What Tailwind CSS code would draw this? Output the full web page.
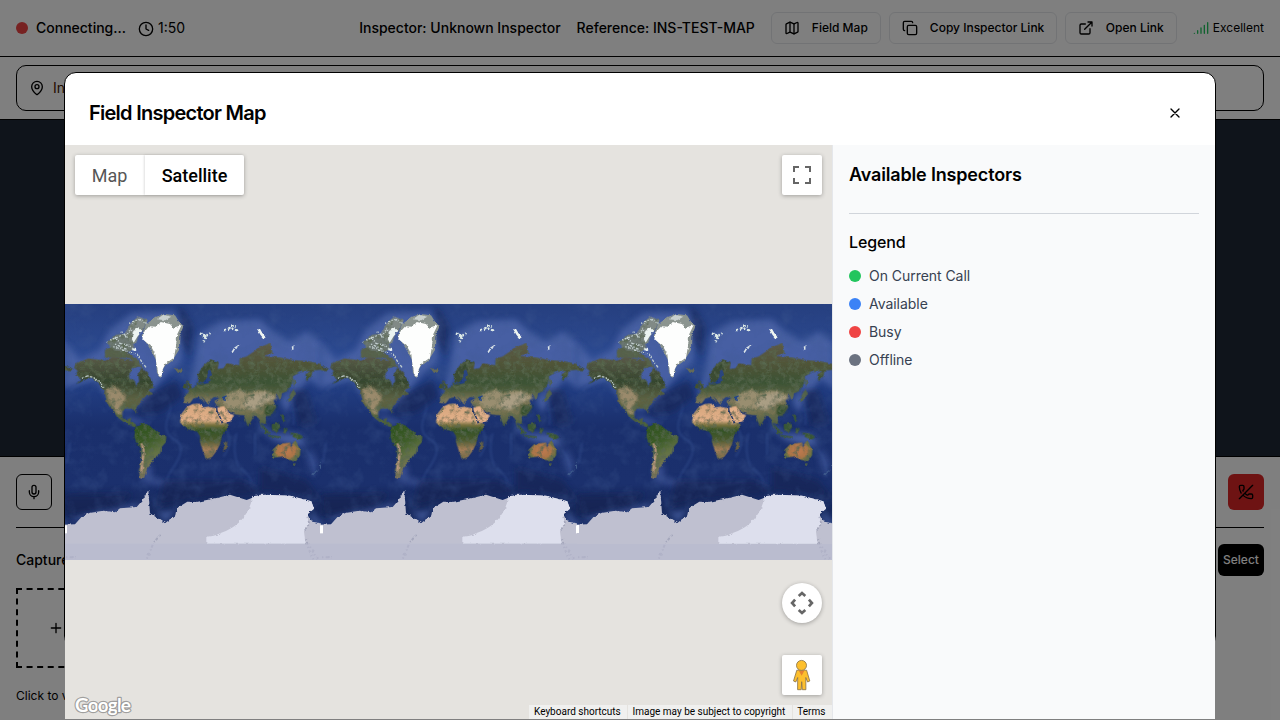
<!DOCTYPE html>
<html lang="en">
<head>
<meta charset="utf-8">
<title>Field Inspector Map</title>
<script src="https://cdn.jsdelivr.net/npm/@tailwindcss/browser@4"></script>
</head>
<body class="relative h-[720px] w-[1280px] overflow-hidden bg-white font-['Inter',sans-serif] text-black">

<!-- Call page -->
<div class="flex h-full flex-col">
  <header class="flex h-[57px] shrink-0 items-center justify-between border-b border-black px-4">
    <div class="flex items-center">
      <span class="size-3 rounded-full bg-[#ef4444]"></span>
      <span class="ml-2 w-[90px] text-sm font-medium">Connecting...</span>
      <svg class="mt-px ml-3 size-4" viewBox="0 0 24 24" fill="none" stroke="currentColor" stroke-width="2" stroke-linecap="round" stroke-linejoin="round"><circle cx="12" cy="12" r="10"/><path d="M12 6v6l4 2"/></svg>
      <span class="ml-1 text-sm">1:50</span>
    </div>
    <div class="flex items-center whitespace-nowrap">
      <span class="text-sm font-medium">Inspector: Unknown Inspector</span>
      <span class="ml-4 text-sm font-medium">Reference: INS-TEST-MAP</span>
      <div class="ml-4 flex gap-2 text-xs font-medium">
        <button class="flex h-8 w-[110px] items-center rounded-md border border-gray-200 pl-3"><svg class="mr-3 size-4" viewBox="0 0 24 24" fill="none" stroke="currentColor" stroke-width="2" stroke-linecap="round" stroke-linejoin="round"><path d="M14.106 5.553a2 2 0 0 0 1.788 0l3.659-1.83A1 1 0 0 1 21 4.619v12.764a1 1 0 0 1-.553.894l-4.553 2.277a2 2 0 0 1-1.788 0l-4.212-2.106a2 2 0 0 0-1.788 0l-3.659 1.83A1 1 0 0 1 3 19.381V6.618a1 1 0 0 1 .553-.894l4.553-2.277a2 2 0 0 1 1.788 0z"/><path d="M15 5.764v15M9 3.236v15"/></svg>Field Map</button>
        <button class="flex h-8 w-[168px] items-center rounded-md border border-gray-200 pl-3"><svg class="mr-3 size-4" viewBox="0 0 24 24" fill="none" stroke="currentColor" stroke-width="2" stroke-linecap="round" stroke-linejoin="round"><rect width="14" height="14" x="8" y="8" rx="2"/><path d="M4 16c-1.1 0-2-.9-2-2V4c0-1.1.9-2 2-2h10c1.1 0 2 .9 2 2"/></svg>Copy Inspector Link</button>
        <button class="flex h-8 w-[112px] items-center rounded-md border border-gray-200 pl-3"><svg class="mr-3 size-4" viewBox="0 0 24 24" fill="none" stroke="currentColor" stroke-width="2" stroke-linecap="round" stroke-linejoin="round"><path d="M15 3h6v6M10 14 21 3M18 13v6a2 2 0 0 1-2 2H5a2 2 0 0 1-2-2V8a2 2 0 0 1 2-2h6"/></svg>Open Link</button>
      </div>
      <svg class="ml-4 size-4" viewBox="0 0 24 24" fill="none" stroke="#22c55e" stroke-width="2" stroke-linecap="round"><path d="M2 20h.01M7 20v-4M12 20v-8M17 20V8M22 4v16"/></svg>
      <span class="ml-1 text-xs">Excellent</span>
    </div>
  </header>

  <div class="h-[63px] shrink-0 border-b border-black px-4 pt-2">
    <div class="flex h-[46px] items-center gap-2 rounded-[10px] border border-black pl-3 text-sm">
      <svg class="size-4" viewBox="0 0 24 24" fill="none" stroke="currentColor" stroke-width="2" stroke-linecap="round" stroke-linejoin="round"><path d="M20 10c0 4.993-5.539 10.193-7.399 11.799a1 1 0 0 1-1.202 0C9.539 20.193 4 14.993 4 10a8 8 0 0 1 16 0"/><circle cx="12" cy="10" r="3"/></svg>
      <span class="text-amber-950">Inspector location</span>
    </div>
  </div>

  <div class="h-[336px] shrink-0 bg-[#1f2937]"></div>

  <div class="grow border-t border-black px-4">
    <div class="flex items-center justify-between border-b border-black py-[17px]">
      <button class="flex size-9 items-center justify-center rounded-md border border-black"><svg class="size-4" viewBox="0 0 24 24" fill="none" stroke="currentColor" stroke-width="2" stroke-linecap="round" stroke-linejoin="round"><path d="M12 2a3 3 0 0 0-3 3v7a3 3 0 0 0 6 0V5a3 3 0 0 0-3-3ZM19 10v2a7 7 0 0 1-14 0v-2M12 19v3"/></svg></button>
      <button class="flex size-9 items-center justify-center rounded-md bg-[#dc2626]"><svg class="size-4" viewBox="0 0 24 24" fill="none" stroke="currentColor" stroke-width="2" stroke-linecap="round" stroke-linejoin="round"><path d="M10.1 13.9a14 14 0 0 0 3.732 2.668 1 1 0 0 0 1.213-.303l.355-.465A2 2 0 0 1 17 15h3a2 2 0 0 1 2 2v3a2 2 0 0 1-2 2 18 18 0 0 1-12.728-5.272M22 2 2 22M4.76 13.582A18 18 0 0 1 2 4a2 2 0 0 1 2-2h3a2 2 0 0 1 2 2v3a2 2 0 0 1-.8 1.6l-.468.351a1 1 0 0 0-.292 1.233 14 14 0 0 0 .244.473"/></svg></button>
    </div>
    <div class="mt-4 flex items-center justify-between">
      <span class="text-sm font-medium">Captured Photos</span>
      <button class="h-8 w-[46px] rounded-md bg-black text-xs font-medium text-white">Select</button>
    </div>
    <div class="mt-3 flex h-20 w-20 items-center justify-center border-2 border-dashed border-black">
      <svg class="size-4" viewBox="0 0 24 24" fill="none" stroke="currentColor" stroke-width="2" stroke-linecap="round"><path d="M5 12h14M12 5v14"/></svg>
    </div>
    <p class="mt-5 w-14 overflow-hidden text-xs whitespace-nowrap">Click to v</p>
  </div>
</div>

<!-- Backdrop -->
<div class="absolute inset-0 bg-black/50"></div>

<!-- Dialog -->
<div class="absolute top-[72px] left-16 h-[576px] w-[1152px] rounded-xl border border-black bg-white">
  <div class="flex h-[72px] items-start justify-between px-6 pt-6">
    <h2 class="text-xl leading-8 font-semibold tracking-[-0.037em]">Field Inspector Map</h2>
    <button class="flex size-8 items-center justify-center"><svg class="size-4" viewBox="0 0 24 24" fill="none" stroke="currentColor" stroke-width="2" stroke-linecap="round"><path d="M18 6 6 18M6 6l12 12"/></svg></button>
  </div>

  <div class="flex h-[574px]">
    <div class="relative h-full w-[767px] shrink-0 overflow-hidden bg-[#e5e3df] font-['Roboto',sans-serif]">
      <svg class="absolute top-[159px] left-0" width="767" height="256" viewBox="0 0 767 256">
        <defs>
          <linearGradient id="sea" x1="0" y1="0" x2="0" y2="1">
            <stop offset="0" stop-color="#263f7f"/><stop offset=".2" stop-color="#2c4a91"/><stop offset=".34" stop-color="#213c80"/><stop offset=".48" stop-color="#1a2f6c"/><stop offset=".7" stop-color="#1b306d"/><stop offset=".8" stop-color="#182a5d"/><stop offset="1" stop-color="#213a7c"/>
          </linearGradient>
          <linearGradient id="eurasia" x1="0" y1="0" x2="0" y2="1">
            <stop offset="0" stop-color="#5d5a48"/><stop offset=".25" stop-color="#505438"/><stop offset=".45" stop-color="#3c5234"/><stop offset=".55" stop-color="#4d5c3c"/><stop offset=".66" stop-color="#7d7659"/><stop offset=".8" stop-color="#777352"/><stop offset="1" stop-color="#3d5637"/>
          </linearGradient>
          <linearGradient id="namerica" x1="0" y1="0" x2="0" y2="1">
            <stop offset="0" stop-color="#5a5a48"/><stop offset=".35" stop-color="#36462f"/><stop offset=".6" stop-color="#5e6244"/><stop offset="1" stop-color="#49613a"/>
          </linearGradient>
          <linearGradient id="africa" x1="0" y1="0" x2="0" y2="1">
            <stop offset="0" stop-color="#d5a57c"/><stop offset=".3" stop-color="#e3b18a"/><stop offset=".38" stop-color="#7c7442"/><stop offset=".48" stop-color="#335226"/><stop offset=".65" stop-color="#4b5b30"/><stop offset=".83" stop-color="#a67f5b"/><stop offset="1" stop-color="#756c46"/>
          </linearGradient>
          <linearGradient id="samerica" x1="0" y1="0" x2=".3" y2="1">
            <stop offset="0" stop-color="#2d511f"/><stop offset=".4" stop-color="#3d5c29"/><stop offset=".65" stop-color="#627245"/><stop offset="1" stop-color="#857660"/>
          </linearGradient>
          <radialGradient id="aus"><stop offset="0" stop-color="#c07a50"/><stop offset=".65" stop-color="#ab7549"/><stop offset="1" stop-color="#68733d"/></radialGradient>
          <filter id="soft3" x="-20%" y="-20%" width="140%" height="140%"><feGaussianBlur stdDeviation="3"/></filter>
          <filter id="soft9" x="-30%" y="-30%" width="160%" height="160%"><feGaussianBlur stdDeviation="9"/></filter>
          <filter id="rough" x="-5%" y="-5%" width="110%" height="110%"><feTurbulence type="fractalNoise" baseFrequency=".09" numOctaves="3" seed="4" result="n"/><feDisplacementMap in="SourceGraphic" in2="n" scale="9" xChannelSelector="R" yChannelSelector="G"/></filter>
          <filter id="grain" filterUnits="userSpaceOnUse" x="15" y="12" width="768" height="768"><feTurbulence type="fractalNoise" baseFrequency=".0208333" numOctaves="4" seed="8" stitchTiles="stitch"/><feColorMatrix values="0 0 0 0 .05  0 0 0 0 .1  0 0 0 0 .28  2 0 0 0 -.9"/></filter>
          <filter id="landgrain" x="0" y="0" width="100%" height="100%"><feTurbulence type="fractalNoise" baseFrequency=".06" numOctaves="4" seed="21"/><feColorMatrix values="0 0 0 0 .1  0 0 0 0 .14  0 0 0 0 .08  2.4 0 0 0 -1.05" result="g"/><feComposite in="g" in2="SourceAlpha" operator="in" result="c"/><feMerge><feMergeNode in="SourceGraphic"/><feMergeNode in="c"/></feMerge></filter>
          <clipPath id="tileclip" clipPathUnits="userSpaceOnUse"><rect x="15" y="12" width="768" height="768"/></clipPath>
          <!-- Sea floor relief, repeated either side of the tile so that it joins up -->
          <g id="relief">
              <g fill="#4b63a6" filter="url(#soft9)" opacity=".9">
                <path d="M15 125 60 180 120 150 150 90 215 40 345 35 375 90 360 190 320 220 290 260 270 300 210 330 160 320 110 240 60 250 15 265Z"/>
                <path d="M420 100 480 65 600 58 640 95 690 125 740 95 783 125V265L750 235 690 260 620 200 420 230 395 290 375 290 400 210Z"/>
                <path d="M660 300 700 250 745 235 700 300 680 340Z"/>
                <path d="M600 365 640 400 720 400 740 440 690 435 640 420 600 385Z"/>
                <path d="M245 500 275 495 275 535 340 545 320 560 250 545Z" opacity=".7"/>
                <path d="M275 600 315 665 350 625 310 640Z"/>
                <path d="M15 665 70 640 160 620 240 610 240 630 60 660Z" opacity=".7"/>
                <path d="M755 640 783 665V690L750 650Z"/>
                <path d="M180 345 240 355 270 375 210 375Z" opacity=".7"/>
                <path d="M750 440 775 490 760 530 740 480Z" opacity=".6"/>
              </g>
              <g fill="none" stroke="#3e5b9d" stroke-width="6" filter="url(#soft3)" opacity=".38">
                <path d="M300 270Q345 300 325 350T345 420 335 510 430 560 490 545M540 505Q580 530 570 555"/>
                <path d="M530 400Q515 450 535 500M585 400V465M695 300Q705 340 700 375M740 450Q770 490 760 530M30 270Q60 250 100 240M20 490 30 430"/>
                <path d="M490 470Q520 430 500 390M690 330Q720 320 760 360"/>
              </g>
              <g fill="#13234f" filter="url(#soft9)" opacity=".6">
                <path d="M250 290 350 240 370 290 300 340 230 345Z"/><path d="M15 585 220 580 180 620 20 650Z"/><path d="M310 540 550 540 620 580 390 600 290 620Z"/><path d="M360 12 400 80 390 180 360 110Z"/><path d="M690 270 740 270 770 370 720 380Z"/><path d="M600 500 740 540 783 600 740 590 600 570Z"/>
              </g>
          </g>
          <g id="world" transform="scale(.333333333) translate(-15 -12)">
            <g clip-path="url(#tileclip)">
              <rect x="0" y="12" width="800" height="768" fill="url(#sea)"/>
              <use href="#relief" x="-768"/><use href="#relief"/><use href="#relief" x="768"/>
              <rect x="15" y="12" width="768" height="768" filter="url(#grain)" opacity=".4"/>
              <g filter="url(#rough)"><g filter="url(#landgrain)">
                <!-- North America -->
                <path fill="url(#namerica)" d="M48 190 85 175 135 182 160 170 215 182 238 188 244 198 220 203 206 224 208 237 223 241 229 258 238 243 233 220 246 203 263 220 277 245 282 262 264 270 279 282 259 288 248 296 239 307 229 322 228 342 219 325 195 325 185 340 189 357 202 359 213 353 211 365 224 370 231 384 218 379 190 365 171 350 157 329 141 310 137 290 132 273 115 249 95 232 75 240 49 252 65 236 46 225 53 213 43 203Z"/>
                <path fill="#57604b" d="M135 150 155 140 190 148 230 175 250 205 235 198 210 175 170 172 135 174Z"/>
                <path fill="#818a86" d="M190 112 212 70 235 50 263 60 255 79 236 105 228 130 205 135Z"/>
                <path fill="#6d7873" d="M140 127 165 105 195 100 225 141 208 155 163 151Z"/>
                <path fill="#9a8a6c" filter="url(#soft3)" d="M137 270 160 255 190 278 198 300 182 318 186 345 170 340 147 305Z"/>
                <!-- South America -->
                <path fill="url(#samerica)" d="M226 383 243 371 267 376 283 389 292 397 319 410 317 427 304 442 300 461 283 473 274 492 262 504 257 519 250 538 240 535 237 512 243 482 244 445 229 428 223 409Z"/>
                <path fill="none" stroke="#bb9981" stroke-width="7" d="M244 430 251 452 247 492 243 520"/>
                <!-- Eurasia -->
                <path fill="url(#eurasia)" d="M372 289 383 280 391 268 410 258 411 246 425 254 446 249 445 230 435 238 427 252 416 240 413 222 429 199 451 179 476 187 473 207 490 205 500 190 538 196 539 176 560 170 578 157 600 141 631 130 637 158 615 168 659 173 699 180 746 184 800 196 800 208 760 211 753 230 740 243 736 224 753 212 720 216 698 229 696 249 684 272 667 280 660 300 651 282 640 301 648 321 632 345 616 348 619 375 604 368 605 388 596 355 583 346 564 380 551 346 528 344 515 338 490 328 470 316 463 303 480 294 463 290 450 300 445 315 435 300 421 287 437 309 415 292 401 294 389 310 373 309Z"/>
                <path fill="#3b4b31" d="M413 225 430 200 451 178 476 188 460 203 444 225 435 240 424 249Z"/>
                <path fill="#998e70" filter="url(#soft3)" d="M495 284 540 268 565 280 590 270 632 277 654 294 625 305 590 328 545 325 510 332 490 310Z"/>
                <path fill="#aa9e84" filter="url(#soft3)" d="M550 305 580 286 610 277 642 293 616 308 580 332 553 320Z"/>
                <path fill="#405030" d="M384 257 380 240 389 247 396 266 384 273ZM371 253 382 251 379 266 370 265Z"/>
                <path fill="#35502f" filter="url(#soft3)" d="M617 314 650 318 632 347 612 345Z"/>
                <path fill="#474f37" d="M5 196 28 201 40 208 31 214 5 209Z"/>
                <!-- Africa, Arabia, Madagascar -->
                <path fill="url(#africa)" d="M360 368 364 342 382 320 398 312 419 311 426 323 445 320 469 326 487 361 501 373 504 383 486 405 481 430 471 450 456 471 438 478 430 457 421 430 420 408 411 394 379 386Z"/>
                <path fill="#e3b08a" d="M472 323 492 318 506 340 522 345 511 365 487 372 473 342Z"/>
                <path fill="#665d43" d="M494 431 502 424 500 448 489 456Z"/>
                <!-- Southeast Asia and Oceania -->
                <path fill="#395636" d="M604 369 620 388 632 402 617 399ZM635 375 657 367 661 381 649 397 636 388ZM670 385 683 389 674 402ZM690 398 710 400 730 411 720 418 700 411ZM663 345 670 343 676 365 668 362ZM624 405 659 409 658 414 625 409Z"/>
                <path fill="#52624a" d="M699 267 708 280 691 304 681 304ZM697 230 706 245 702 262Z"/>
                <path fill="url(#aus)" d="M637 451 654 433 674 429 690 428 692 440 705 421 721 450 720 466 707 484 684 479 669 469 640 473Z"/>
                <path fill="#53643e" d="M697 491 708 491 701 498Z"/>
              </g>
                <path fill="#3f5b8c" d="M780 485 792 500 780 507ZM777 506 760 526 753 523Z"/>
                <!-- Inland water -->
                <path fill="#2a447f" d="M442 219 450 208 455 220 446 236 458 240 442 246Z"/>
                <path fill="#24458a" d="M488 290 500 286 497 304 489 300Z"/>
                <path fill="none" stroke="#223764" stroke-width="4" d="M469 328 488 369"/>
                <!-- Snow -->
                <path fill="none" stroke="#b9c6c4" stroke-width="4" stroke-dasharray="7 4 12 3" d="M66 235 82 228 100 232 117 245 132 263"/>
                <path fill="none" stroke="#c3d0d0" stroke-width="4" stroke-dasharray="4 5 8 4" d="M140 128 167 112 180 130 208 137 225 151M160 140 190 150 232 164 245 185 258 202M207 70 236 58 260 70M196 112 213 86 220 117M150 120 190 105M165 132 200 148M185 95 205 115"/>
                <path fill="#ecf4f2" d="M220 93 235 82 247 92 232 110 221 128 216 118ZM222 145 230 148 228 153 216 151Z"/>
                <!-- Greenland and Iceland -->
                <path fill="#8b948f" d="M258 73 289 50 313 42 345 46 360 70 371 77 358 110 357 150 336 183 311 202 303 235 291 219 287 178 267 142 245 107Z"/>
                <path fill="#fdfefd" d="M250 98 268 79 290 80 302 66 330 72 340 83 365 75 352 102 348 139 342 173 316 191 306 213 304 232 295 222 289 190 286 163 273 139 247 117Z"/>
                <path fill="#c9d0cf" d="M290 58 310 44 334 50 316 61Z"/>
                <path fill="#646a58" d="M345 207 365 205 368 214 354 219Z"/>
                <path fill="none" stroke="#dce9e6" stroke-width="7" stroke-dasharray="6 5 9 3" d="M420 100 435 110 450 100M431 127 438 103M493 91 510 84 535 92M515 76 527 82"/>
                <path fill="none" stroke="#eff5f1" stroke-width="8" d="M595 86 605 103 614 114"/><path fill="none" stroke="#dce5e9" stroke-width="5" d="M516 158 524 145 540 134M698 139V149"/>
                <!-- Antarctica -->
                <path fill="#bfc0d0" d="M-15 675 45 673 65 650 90 638 130 632 165 637 180 625 230 621 248 600 265 570 270 640 293 655 315 670 346 646 350 625 382 605 410 606 470 594 510 584 560 600 600 584 690 587 754 604 762 626 744 641 757 665 815 675V810H-15Z"/>
                <path fill="#dddfed" d="M576 589 616 584 690 587 754 604 762 626 744 641 744 670 732 695 737 731H439V709Q455 712 480 700 552 676 573 609Z"/>
                <path fill="none" stroke="#8689a3" stroke-width="6" stroke-dasharray="4 7 9 6" opacity=".45" d="M742 650 748 670 734 692M738 715 745 745 760 778M750 740 772 778M300 705 280 730 260 778M18 772H50"/>
              </g>
              <rect x="0" y="731" width="800" height="60" fill="#b7b9ce" opacity=".6"/>
              <path fill="#fff" d="M15 676h6v24h-6zM780 676h10v24h-10z"/>
            </g>
          </g>
        </defs>
        <use href="#world"/><use href="#world" x="256"/><use href="#world" x="512"/>
      </svg>

      <div class="absolute top-[10px] left-[10px] flex h-10 rounded-xs bg-white text-lg shadow-[0_1px_4px_rgba(0,0,0,0.3)]">
        <button class="w-[70px] pt-0.5 pr-px text-[#565656]">Map</button>
        <button class="w-[99px] pt-0.5 font-medium shadow-[-1px_0_2px_rgba(0,0,0,0.12)]">Satellite</button>
      </div>
      <button class="absolute top-[10px] right-[10px] flex size-10 items-center justify-center rounded-xs bg-white shadow-[0_1px_4px_rgba(0,0,0,0.3)]"><svg class="size-[18px]" viewBox="0 0 18 18" fill="#666"><path d="M0 0v6h2V2h4V0H0zm16 0h-4v2h4v4h2V0h-2zm0 16h-4v2h6v-6h-2v4zM2 12H0v6h6v-2H2v-4z"/></svg></button>
      <button class="absolute top-[438px] right-[10px] flex size-10 items-center justify-center rounded-full bg-white shadow-[0_1px_4px_rgba(0,0,0,0.3)]"><svg class="size-6" viewBox="0 0 24 24" fill="none" stroke="#666" stroke-width="2.7"><path d="m8.7 5.1 3.3-3 3.3 3M8.7 18.9l3.3 3 3.3-3M5.1 8.7l-3 3.3 3 3.3M18.9 8.7l3 3.3-3 3.3"/></svg></button>
      <button class="absolute top-[510px] right-[10px] size-10 rounded-xs bg-white shadow-[0_1px_4px_rgba(0,0,0,0.3)]"><svg class="size-10" viewBox="0 0 40 40"><g fill="#fdbf2d" stroke="#857047" stroke-width=".8"><path d="M14.8 15.2h9.8l3.2 10.8-2.2 1-1.8-4.5.1 12.2h-3.6l-.6-8-.5 8h-3.6l.1-12.2-1.9 4.5-2.3-1z"/><circle cx="19.5" cy="10.4" r="5"/></g><path fill="#e58031" d="M16.6 15.2q3 1.5 6 0l-3 5.6z"/></svg></button>
      <svg class="absolute bottom-0 left-[8px]" width="64" height="28" viewBox="0 0 64 28"><text x="2" y="20.5" font-family="Lato, sans-serif" font-size="19" font-weight="700" textLength="56" fill="#fff" stroke="#8d8d8d" stroke-width="2.4" stroke-opacity=".8" paint-order="stroke" stroke-linejoin="round">Google</text></svg>
      <div class="absolute right-0 bottom-0 flex h-[14px] gap-px text-[10px] leading-[14px] text-black">
        <span class="w-[98px] bg-[#f5f5f5]/70 pl-[5px]">Keyboard shortcuts</span>
        <span class="w-[164px] bg-[#f5f5f5]/70 pl-[4.5px]">Image may be subject to copyright</span>
        <span class="w-[39px] bg-[#f5f5f5]/70 pl-[4.3px]">Terms</span>
      </div>
    </div>

    <aside class="h-full grow border-l border-[#e5e7eb] bg-[#f9fafb] p-4">
      <h3 class="text-lg leading-7 font-semibold tracking-[-0.009em]">Available Inspectors</h3>
      <div class="mt-6 border-t border-[#d1d5db] pt-4">
        <h4 class="mb-3 leading-6 font-medium tracking-[-0.008em]">Legend</h4>
        <ul class="space-y-2 text-sm tracking-[-0.003em] text-[#374151]">
          <li class="flex items-center gap-2"><span class="size-3 rounded-full bg-[#22c55e]"></span>On Current Call</li>
          <li class="flex items-center gap-2"><span class="size-3 rounded-full bg-[#3b82f6]"></span>Available</li>
          <li class="flex items-center gap-2"><span class="size-3 rounded-full bg-[#ef4444]"></span>Busy</li>
          <li class="flex items-center gap-2"><span class="size-3 rounded-full bg-[#6b7280]"></span>Offline</li>
        </ul>
      </div>
    </aside>
  </div>
</div>
</body>
</html>
